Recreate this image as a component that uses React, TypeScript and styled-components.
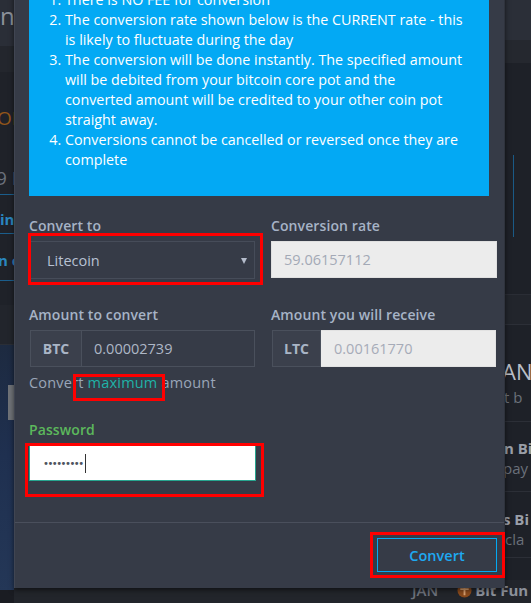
import React from 'react';
import styled, { createGlobalStyle } from 'styled-components';

const Global = createGlobalStyle`
  html, body { margin: 0; padding: 0; background: #1c1e24; }
  body { width: 531px; height: 603px; overflow: hidden; font-family: "Open Sans", "Noto Sans", sans-serif; }
  * { box-sizing: border-box; }
`;

const Page = styled.div`
  position: relative;
  width: 531px;
  height: 603px;
  overflow: hidden;
`;

/* ---------- background page (seen behind the dimmed backdrop) ---------- */
const Backdrop = styled.div`
  display: grid;
  grid-template-columns: 14px 491px 26px;
  grid-template-rows: 580px 23px;
  height: 603px;
`;

const SideCol = styled.div<{ $area: string }>`
  grid-area: ${p => p.$area};
  display: flex;
  flex-direction: column;
  overflow: hidden;
  white-space: nowrap;
`;

const Block = styled.div<{ $h: number; $bg: string; $line?: string; $pt?: number }>`
  flex: 0 0 ${p => p.$h}px;
  height: ${p => p.$h}px;
  background: ${p => p.$bg};
  border-bottom: ${p => (p.$line ? `1px solid ${p.$line}` : 'none')};
  display: flex;
  flex-direction: column;
  justify-content: flex-start;
  padding-top: ${p => p.$pt ?? 0}px;
  overflow: hidden;
`;

const Grow = styled.div<{ $bg: string }>`
  flex: 1;
  background: ${p => p.$bg};
  display: flex;
  flex-direction: column;
  padding-top: 40px;
`;

const BgText = styled.span<{ $c: string; $s: number; $w?: number; $shift?: number; $lh?: number }>`
  display: block;
  color: ${p => p.$c};
  font-family: "Open Sans", sans-serif;
  font-size: ${p => p.$s}px;
  font-weight: ${p => p.$w ?? 400};
  line-height: ${p => p.$lh ?? 20}px;
  margin-left: ${p => p.$shift ?? 0}px;
`;

const BlueTab = styled.div`
  width: 1px;
  height: 82px;
  margin-left: 8px;
  margin-top: 92px;
  background: #1a5a86;
`;

const GreyTab = styled.div`
  width: 6px;
  height: 35px;
  margin-left: 8px;
  background: #6f7277;
`;

const BottomRow = styled.div`
  grid-area: 2 / 2 / 3 / 4;
  background: #22252b;
  display: flex;
  align-items: flex-start;
  padding-left: 398px;
  gap: 19px;
  overflow: hidden;
  white-space: nowrap;
`;

const BottomItem = styled.span<{ $c: string; $w?: number }>`
  font-family: "Open Sans", sans-serif;
  font-size: 15px;
  font-weight: ${p => p.$w ?? 600};
  color: ${p => p.$c};
  line-height: 20px;
  display: flex;
  align-items: center;
  gap: 3px;
`;

/* ---------------------------- modal ---------------------------- */
const Modal = styled.div`
  position: absolute;
  left: 14px;
  top: -10px;
  width: 491px;
  height: 598px;
  background: #363b47;
  border-left: 1px solid #404552;
  border-right: 1px solid #2f333d;
  box-shadow: 0 2px 5px rgba(0, 0, 0, 0.55);
  display: flex;
  flex-direction: column;
  font-family: "Open Sans", "Noto Sans", sans-serif;
`;

const Body = styled.div`
  padding: 0 15px 0 14px;
  flex: 1;
`;

const InfoBox = styled.div`
  background: #03a9f4;
  color: #ffffff;
  padding: 0 14px 26px 20px;
  font-size: 14.3px;
  line-height: 20px;
  white-space: nowrap;
`;

const InfoList = styled.ol`
  margin: 0;
  padding-left: 16px;
`;

const FormGrid = styled.div`
  display: grid;
  grid-template-columns: 227px 226px;
  column-gap: 15px;
  width: 468px;
  margin-top: 20px;
`;

const Group = styled.div<{ $mb?: number }>`
  display: flex;
  flex-direction: column;
  margin-bottom: ${p => p.$mb ?? 26}px;
`;

const Label = styled.label<{ $green?: boolean }>`
  font-size: 14px;
  font-weight: 600;
  line-height: 20px;
  letter-spacing: 0.1px;
  color: ${p => (p.$green ? '#5cb85c' : '#a6b3c6')};
  margin-bottom: 5px;
`;

const Marked = styled.div`
  position: relative;
`;

const RedBox = styled.div<{ $t: number; $r: number; $b: number; $l: number }>`
  position: absolute;
  top: ${p => p.$t}px;
  right: ${p => p.$r}px;
  bottom: ${p => p.$b}px;
  left: ${p => p.$l}px;
  border: 3px solid #ff0000;
  pointer-events: none;
`;

const Select = styled.div`
  height: 38px;
  border: 1px solid #464c59;
  background: #363b47;
  margin-left: 1px;
  margin-right: 1px;
  display: flex;
  align-items: center;
  justify-content: space-between;
  padding: 0 7px 0 16px;
  color: #b7c1d3;
  font-size: 14.5px;
`;

const Caret = styled.span`
  width: 0;
  height: 0;
  border-left: 3.5px solid transparent;
  border-right: 3.5px solid transparent;
  border-top: 6px solid #b4bccb;
  margin-top: 2px;
`;

const ReadOnly = styled.div`
  height: 37px;
  background: #ececec;
  border: 1px solid #e0e0e0;
  display: flex;
  align-items: center;
  padding-left: 12px;
  color: #a3a9b6;
  font-size: 14.5px;
`;

const InputGroup = styled.div`
  display: flex;
  height: 37px;
  margin-left: 1px;
  margin-right: 1px;
`;

const Addon = styled.div<{ $w: number }>`
  flex: 0 0 ${p => p.$w}px;
  background: #3b404c;
  border: 1px solid #4a505c;
  display: flex;
  align-items: center;
  justify-content: center;
  color: #a9b5c6;
  font-weight: 700;
  font-size: 14px;
`;

const GroupInput = styled.div<{ $light?: boolean }>`
  flex: 1;
  border: 1px solid ${p => (p.$light ? '#e2e2e2' : '#4a505c')};
  border-left: none;
  background: ${p => (p.$light ? '#ececec' : '#363b47')};
  display: flex;
  align-items: center;
  padding-left: ${p => (p.$light ? 13 : 12)}px;
  color: ${p => (p.$light ? '#a6abb8' : '#aeb7c6')};
  font-size: 14.5px;
`;

const Help = styled.div`
  grid-column: 1 / 3;
  margin-top: 6px;
  font-size: 14.5px;
  line-height: 20px;
  letter-spacing: 0.2px;
  color: #9aa6b8;
`;

const MaxLink = styled.span`
  position: relative;
  color: #1fb3a8;
`;

const PasswordWrap = styled.div`
  grid-column: 1 / 2;
  display: flex;
  flex-direction: column;
  margin-top: 27px;
`;

const Password = styled.div`
  height: 36px;
  background: #ffffff;
  border: 1px solid #27a58f;
  border-top-color: #ffffff;
  display: flex;
  align-items: center;
  padding-left: 13px;
`;

const Dots = styled.span`
  color: #4e5460;
  font-size: 10px;
  letter-spacing: -1.5px;
  font-family: "DejaVu Sans", sans-serif;
`;

const TextCaret = styled.span`
  width: 1px;
  height: 19px;
  background: #333;
  margin-left: 2px;
`;

const Footer = styled.div`
  border-top: 1px solid #4a4f5c;
  padding: 15px 7px 16px 0;
  display: flex;
  justify-content: flex-end;
`;

const Button = styled.button`
  width: 120px;
  height: 34px;
  background: transparent;
  border: 1px solid #03a9f4;
  color: #1ea9f2;
  font-family: "Open Sans", sans-serif;
  font-size: 14.5px;
  font-weight: 600;
  padding: 0;
`;

const Coin = () => (
  <svg width="15" height="15" viewBox="0 0 16 16">
    <circle cx="8" cy="8" r="7.5" fill="#8a4a1c" />
    <path d="M8 3v10M3.5 6.5h9" stroke="#d9a070" strokeWidth="2" />
  </svg>
);

export default function App() {
  return (
    <Page>
      <Global />
      <Backdrop>
        <SideCol $area="1 / 1 / 3 / 2">
          <Block $h={46} $bg="#2a2e37" $pt={2}>
            <BgText $c="#8d929b" $s={24} $lh={28}>n</BgText>
          </Block>
          <Block $h={26} $bg="#23262d" />
          <Block $h={233} $bg="#1f2229" $pt={34}>
            <BgText $c="#93561a" $s={19} $shift={-3} $lh={24}>OF</BgText>
            <BgText $c="#6b717c" $s={19} $shift={-4} $lh={24} style={{ marginTop: 36 }}>
              9 I
            </BgText>
            <Block $h={40} $bg="#1f2229" $line="#1b5e8c" $pt={14} style={{ borderTop: '1px solid #1b5e8c', marginTop: 4 }}>
              <BgText $c="#2a86bf" $s={15} $w={700}>in</BgText>
            </Block>
            <Block $h={47} $bg="#1f2229" $line="#1b5e8c" $pt={16}>
              <BgText $c="#2a86bf" $s={15} $w={700} $shift={-2}>n c</BgText>
            </Block>
          </Block>
          <Block $h={40} $bg="#22252c" $line="#2a2e36" />
          <Grow $bg="linear-gradient(160deg, #1d2a40 0%, #1f3050 45%, #243757 100%)">
            <GreyTab />
          </Grow>
          <Block $h={13} $bg="#1a1c22" />
        </SideCol>
        <SideCol $area="1 / 3 / 2 / 4">
          <Block $h={40} $bg="#2b2f38" />
          <Block $h={23} $bg="#25282f" />
          <Block $h={232} $bg="#1e2128" $line="#2a2d35">
            <BlueTab />
          </Block>
          <Block $h={30} $bg="#22252c" $line="#2c2f37" />
          <Block $h={97} $bg="#1e2128" $line="#2c2f37" $pt={33}>
            <BgText $c="#b9bec6" $s={22} $shift={-3} $lh={26}>AN</BgText>
            <BgText $c="#6a707a" $s={15} $shift={-1} style={{ marginTop: 3 }}>t b</BgText>
          </Block>
          <Block $h={70} $bg="#1e2128" $line="#2c2f37" $pt={16}>
            <BgText $c="#9a9fa8" $s={15} $w={700} $shift={-1}>n Bi</BgText>
            <BgText $c="#6a707a" $s={15} $shift={-2}>pay</BgText>
          </Block>
          <Block $h={66} $bg="#1e2128" $line="#2c2f37" $pt={17}>
            <BgText $c="#9a9fa8" $s={15} $w={700} $shift={-2}>s Bi</BgText>
            <BgText $c="#6a707a" $s={15}>cla</BgText>
          </Block>
          <Block $h={30} $bg="#1e2128" />
        </SideCol>
        <BottomRow>
          <BottomItem $c="#6d727c">JAN</BottomItem>
          <BottomItem $c="#8c919a" $w={700}>
            <Coin />
            Bit Fun
          </BottomItem>
        </BottomRow>
      </Backdrop>

      <Modal>
        <Body>
          <InfoBox>
            <InfoList>
              <li>There is NO FEE for conversion</li>
              <li>
                The conversion rate shown below is the CURRENT rate - this
                <br />
                is likely to fluctuate during the day
              </li>
              <li>
                The conversion will be done instantly. The specified amount
                <br />
                will be debited from your bitcoin core pot and the
                <br />
                converted amount will be credited to your other coin pot
                <br />
                straight away.
              </li>
              <li>
                Conversions cannot be cancelled or reversed once they are
                <br />
                complete
              </li>
            </InfoList>
          </InfoBox>

          <FormGrid>
            <Group>
              <Label>Convert to</Label>
              <Marked>
                <Select>
                  Litecoin
                  <Caret />
                </Select>
                <RedBox $t={-8} $r={-7} $b={-6} $l={-1} />
              </Marked>
            </Group>
            <Group>
              <Label>Conversion rate</Label>
              <ReadOnly>59.06157112</ReadOnly>
            </Group>

            <Group $mb={0}>
              <Label>Amount to convert</Label>
              <InputGroup>
                <Addon $w={52}>BTC</Addon>
                <GroupInput>0.00002739</GroupInput>
              </InputGroup>
            </Group>
            <Group $mb={0}>
              <Label>Amount you will receive</Label>
              <InputGroup>
                <Addon $w={49}>LTC</Addon>
                <GroupInput $light>0.00161770</GroupInput>
              </InputGroup>
            </Group>

            <Help>
              Convert{' '}
              <MaxLink>
                maximum
                <RedBox $t={1} $r={-8} $b={-9} $l={-15} />
              </MaxLink>{' '}
              amount
            </Help>

            <PasswordWrap>
              <Label $green>Password</Label>
              <Marked>
                <Password>
                  <Dots>•••••••••</Dots>
                  <TextCaret />
                </Password>
                <RedBox $t={-2} $r={-8} $b={-16} $l={-4} />
              </Marked>
            </PasswordWrap>
          </FormGrid>
        </Body>
        <Footer>
          <Marked>
            <Button>Convert</Button>
            <RedBox $t={-6} $r={-8} $b={-6} $l={-7} />
          </Marked>
        </Footer>
      </Modal>
    </Page>
  );
}
